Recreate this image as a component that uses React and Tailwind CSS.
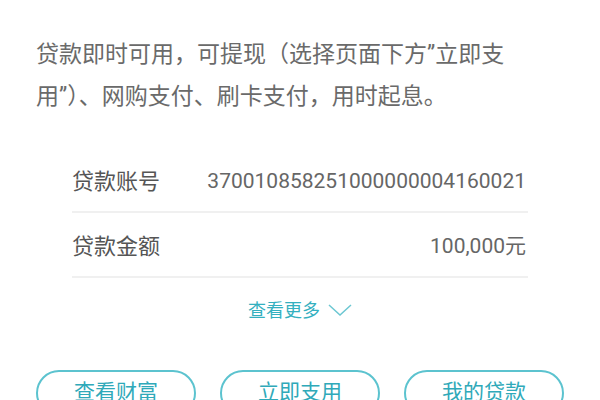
import React from "react";

const rows = [
  { label: "贷款账号", value: "370010858251000000004160021" },
  { label: "贷款金额", value: "100,000元" },
];

const buttons = ["查看财富", "立即支用", "我的贷款"];

export default function App() {
  return (
    <div
      className="w-[600px] h-[400px] overflow-hidden bg-white"
      style={{ fontFamily: '"Roboto", "Noto Sans CJK SC", sans-serif' }}
    >
      {/* 说明文字 */}
      <p className="pt-[34px] px-[36px] text-[23px] leading-[42px] text-[#6a6a6a]">
        贷款即时可用，可提现（选择页面下方”立即支用”）、网购支付、刷卡支付，用时起息。
      </p>

      {/* 贷款信息 */}
      <div className="mx-[72px] mt-[30px]">
        {rows.map((row) => (
          <div
            key={row.label}
            className="flex items-center justify-between h-[65px] pt-[4px] border-b-2 border-[#f0f0f0]"
          >
            <span className="text-[22px] text-[#555]">{row.label}</span>
            <span className="text-[21px] text-[#666] pr-[2px]">{row.value}</span>
          </div>
        ))}
      </div>

      {/* 查看更多 */}
      <div className="flex items-center justify-center gap-[8px] mt-[20px] h-[24px] text-[18px] text-[#34b0bf]">
        <span>查看更多</span>
        <svg width="24" height="12" viewBox="0 0 24 12" fill="none">
          <path d="M1 1 L12 11 L23 1" stroke="#6cc7d2" strokeWidth="1.5" />
        </svg>
      </div>

      {/* 按钮 */}
      <div className="grid grid-cols-3 gap-[24px] px-[36px] mt-[48px]">
        {buttons.map((b) => (
          <button
            key={b}
            className="h-[46px] rounded-full border-2 border-[#5cc3cf] text-[21px] text-[#2fa9b9]"
          >
            {b}
          </button>
        ))}
      </div>
    </div>
  );
}
